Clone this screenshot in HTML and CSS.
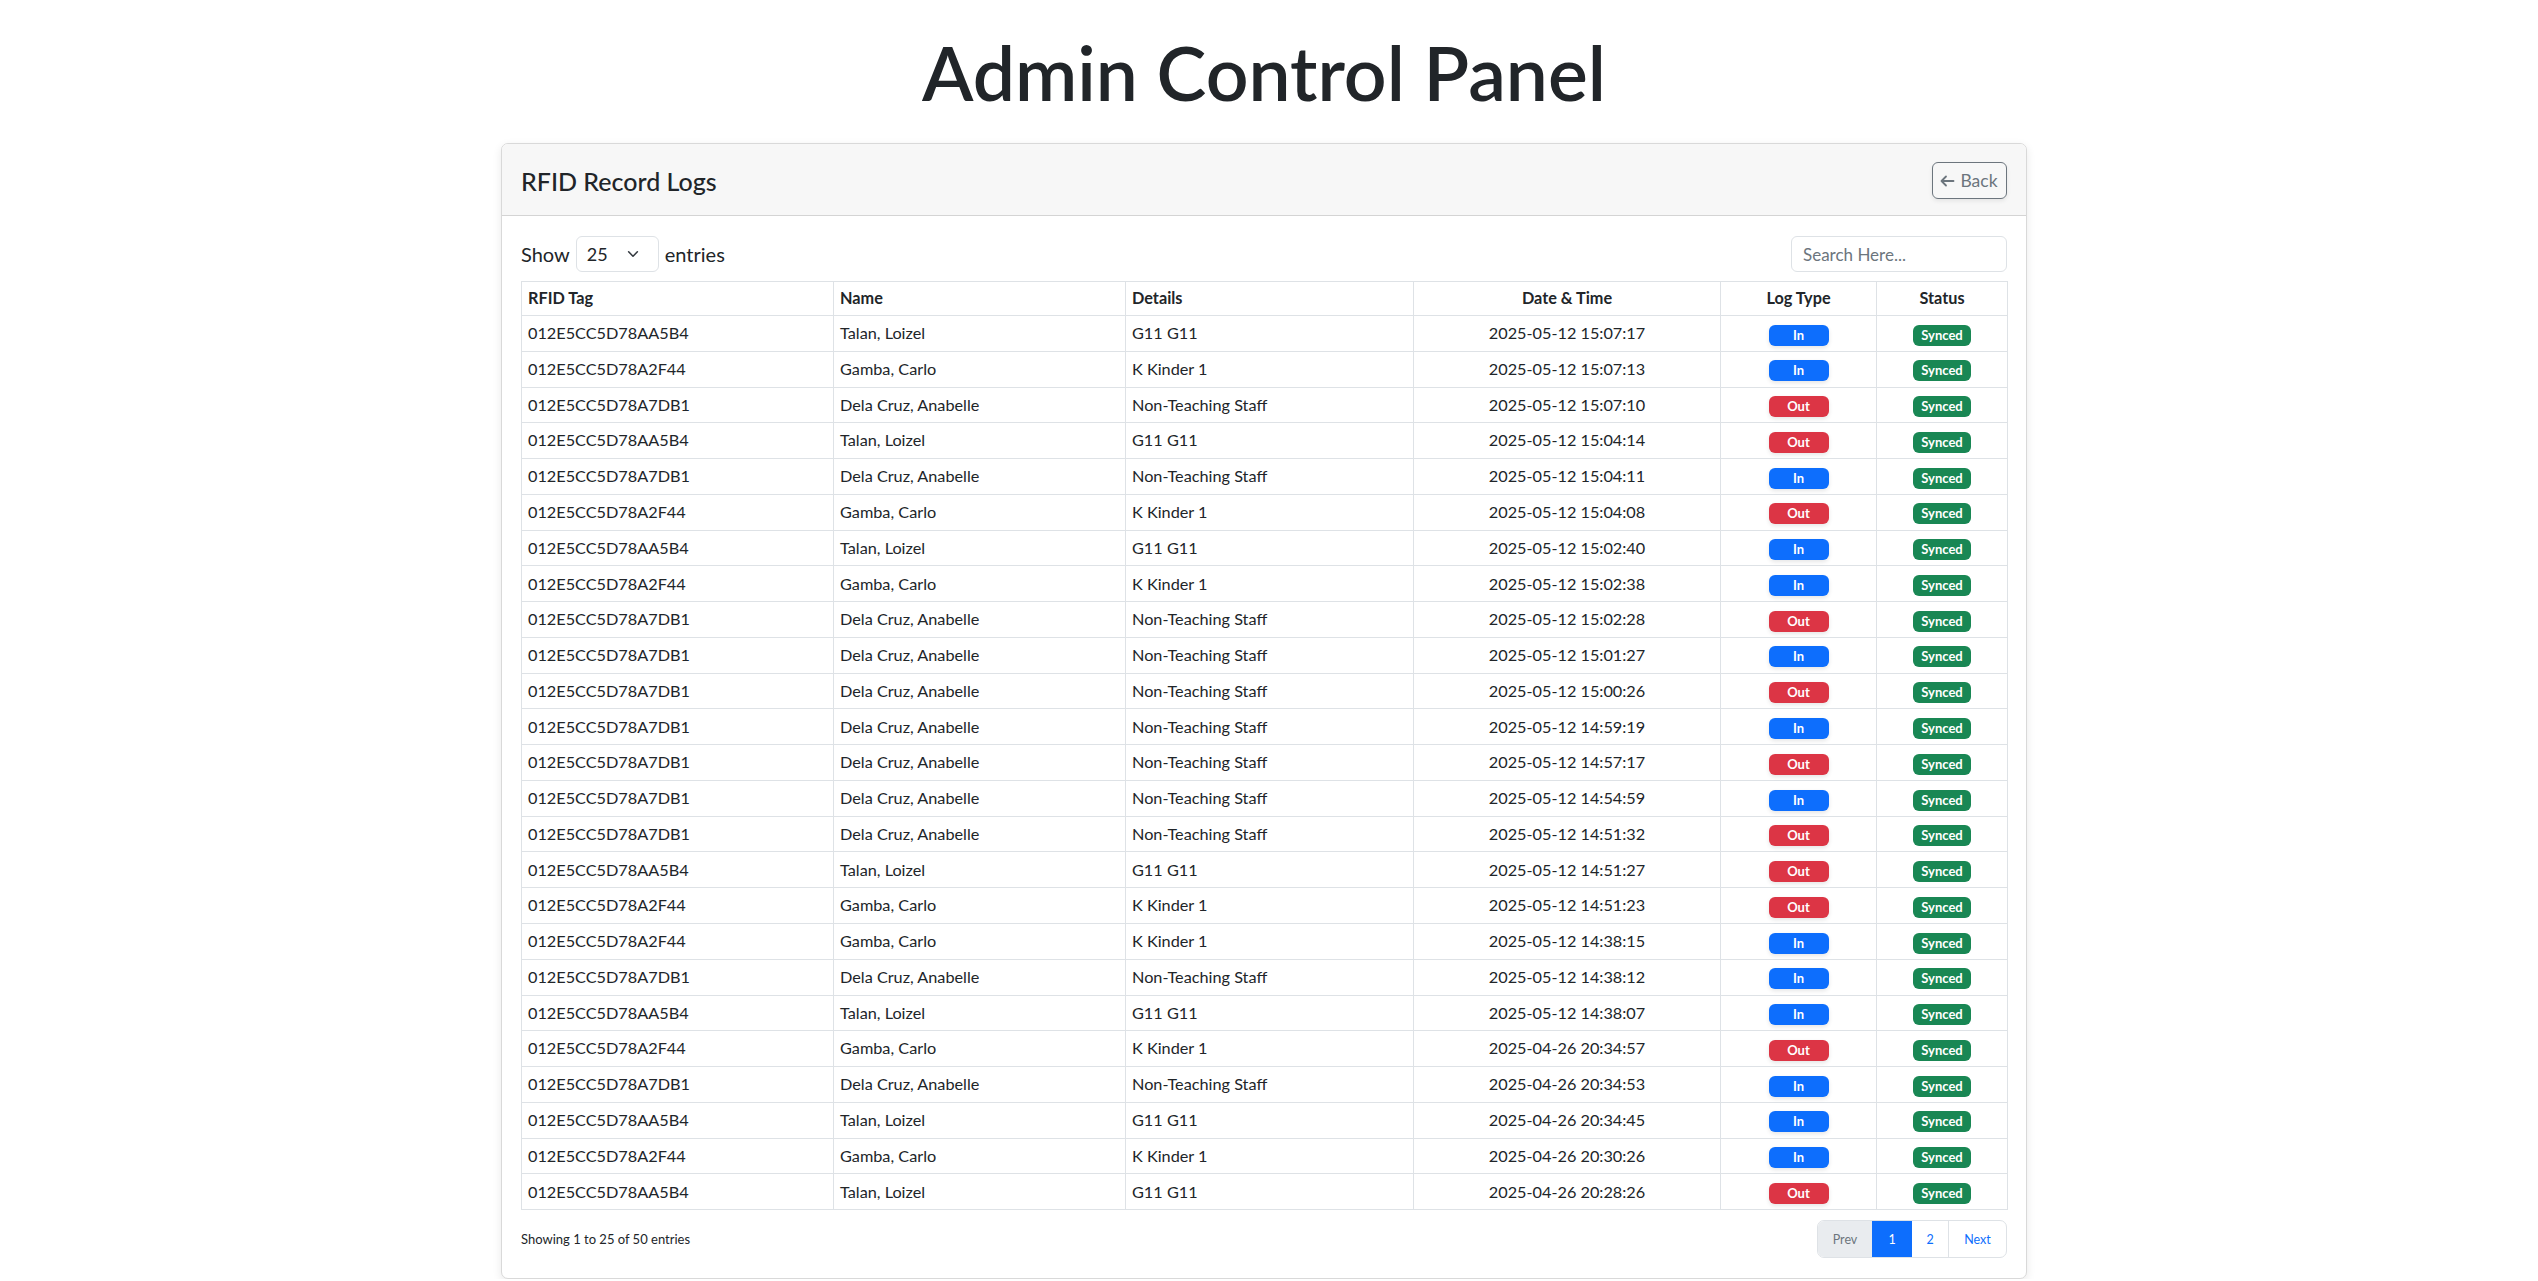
FILE: index.html
```html
<!DOCTYPE html>
<html lang="en">
<head>
<meta charset="utf-8">
<title>Admin Control Panel</title>
<link rel="stylesheet" href="styles.css">
</head>
<body>
<h1 class="page-title">Admin Control Panel</h1>
<div class="card">
  <div class="card-header">
    <h5 class="card-title">RFID Record Logs</h5>
    <button class="btn-back" type="button">
      <svg class="back-icon" viewBox="0 0 16 16" width="16" height="16"><path d="M14.5 8H2.5M7 3.5L2.5 8L7 12.5" fill="none" stroke="currentColor" stroke-width="1.8" stroke-linecap="round" stroke-linejoin="round"/></svg>
      <span>Back</span>
    </button>
  </div>
  <div class="card-body">
    <div class="toolbar">
      <div class="length">
        <span>Show</span>
        <div class="select"><span>25</span><svg class="chev" viewBox="0 0 16 16" width="14" height="14"><path d="M3 5.5l5 5 5-5" fill="none" stroke="#343a40" stroke-width="1.8" stroke-linecap="round" stroke-linejoin="round"/></svg></div>
        <span>entries</span>
      </div>
      <div class="search"><input type="text" placeholder="Search Here..."></div>
    </div>
    <table class="logs">
      <colgroup>
        <col class="c1"><col class="c2"><col class="c3"><col class="c4"><col class="c5"><col class="c6">
      </colgroup>
      <thead>
        <tr><th>RFID Tag</th><th>Name</th><th>Details</th><th class="ctr">Date &amp; Time</th><th class="ctr">Log Type</th><th class="ctr">Status</th></tr>
      </thead>
      <tbody>
        <tr><td>012E5CC5D78AA5B4</td><td>Talan, Loizel</td><td>G11 G11</td><td class="ctr">2025-05-12 15:07:17</td><td class="ctr"><span class="badge in">In</span></td><td class="ctr"><span class="badge synced">Synced</span></td></tr>
        <tr><td>012E5CC5D78A2F44</td><td>Gamba, Carlo</td><td>K Kinder 1</td><td class="ctr">2025-05-12 15:07:13</td><td class="ctr"><span class="badge in">In</span></td><td class="ctr"><span class="badge synced">Synced</span></td></tr>
        <tr><td>012E5CC5D78A7DB1</td><td>Dela Cruz, Anabelle</td><td>Non-Teaching Staff</td><td class="ctr">2025-05-12 15:07:10</td><td class="ctr"><span class="badge out">Out</span></td><td class="ctr"><span class="badge synced">Synced</span></td></tr>
        <tr><td>012E5CC5D78AA5B4</td><td>Talan, Loizel</td><td>G11 G11</td><td class="ctr">2025-05-12 15:04:14</td><td class="ctr"><span class="badge out">Out</span></td><td class="ctr"><span class="badge synced">Synced</span></td></tr>
        <tr><td>012E5CC5D78A7DB1</td><td>Dela Cruz, Anabelle</td><td>Non-Teaching Staff</td><td class="ctr">2025-05-12 15:04:11</td><td class="ctr"><span class="badge in">In</span></td><td class="ctr"><span class="badge synced">Synced</span></td></tr>
        <tr><td>012E5CC5D78A2F44</td><td>Gamba, Carlo</td><td>K Kinder 1</td><td class="ctr">2025-05-12 15:04:08</td><td class="ctr"><span class="badge out">Out</span></td><td class="ctr"><span class="badge synced">Synced</span></td></tr>
        <tr><td>012E5CC5D78AA5B4</td><td>Talan, Loizel</td><td>G11 G11</td><td class="ctr">2025-05-12 15:02:40</td><td class="ctr"><span class="badge in">In</span></td><td class="ctr"><span class="badge synced">Synced</span></td></tr>
        <tr><td>012E5CC5D78A2F44</td><td>Gamba, Carlo</td><td>K Kinder 1</td><td class="ctr">2025-05-12 15:02:38</td><td class="ctr"><span class="badge in">In</span></td><td class="ctr"><span class="badge synced">Synced</span></td></tr>
        <tr><td>012E5CC5D78A7DB1</td><td>Dela Cruz, Anabelle</td><td>Non-Teaching Staff</td><td class="ctr">2025-05-12 15:02:28</td><td class="ctr"><span class="badge out">Out</span></td><td class="ctr"><span class="badge synced">Synced</span></td></tr>
        <tr><td>012E5CC5D78A7DB1</td><td>Dela Cruz, Anabelle</td><td>Non-Teaching Staff</td><td class="ctr">2025-05-12 15:01:27</td><td class="ctr"><span class="badge in">In</span></td><td class="ctr"><span class="badge synced">Synced</span></td></tr>
        <tr><td>012E5CC5D78A7DB1</td><td>Dela Cruz, Anabelle</td><td>Non-Teaching Staff</td><td class="ctr">2025-05-12 15:00:26</td><td class="ctr"><span class="badge out">Out</span></td><td class="ctr"><span class="badge synced">Synced</span></td></tr>
        <tr><td>012E5CC5D78A7DB1</td><td>Dela Cruz, Anabelle</td><td>Non-Teaching Staff</td><td class="ctr">2025-05-12 14:59:19</td><td class="ctr"><span class="badge in">In</span></td><td class="ctr"><span class="badge synced">Synced</span></td></tr>
        <tr><td>012E5CC5D78A7DB1</td><td>Dela Cruz, Anabelle</td><td>Non-Teaching Staff</td><td class="ctr">2025-05-12 14:57:17</td><td class="ctr"><span class="badge out">Out</span></td><td class="ctr"><span class="badge synced">Synced</span></td></tr>
        <tr><td>012E5CC5D78A7DB1</td><td>Dela Cruz, Anabelle</td><td>Non-Teaching Staff</td><td class="ctr">2025-05-12 14:54:59</td><td class="ctr"><span class="badge in">In</span></td><td class="ctr"><span class="badge synced">Synced</span></td></tr>
        <tr><td>012E5CC5D78A7DB1</td><td>Dela Cruz, Anabelle</td><td>Non-Teaching Staff</td><td class="ctr">2025-05-12 14:51:32</td><td class="ctr"><span class="badge out">Out</span></td><td class="ctr"><span class="badge synced">Synced</span></td></tr>
        <tr><td>012E5CC5D78AA5B4</td><td>Talan, Loizel</td><td>G11 G11</td><td class="ctr">2025-05-12 14:51:27</td><td class="ctr"><span class="badge out">Out</span></td><td class="ctr"><span class="badge synced">Synced</span></td></tr>
        <tr><td>012E5CC5D78A2F44</td><td>Gamba, Carlo</td><td>K Kinder 1</td><td class="ctr">2025-05-12 14:51:23</td><td class="ctr"><span class="badge out">Out</span></td><td class="ctr"><span class="badge synced">Synced</span></td></tr>
        <tr><td>012E5CC5D78A2F44</td><td>Gamba, Carlo</td><td>K Kinder 1</td><td class="ctr">2025-05-12 14:38:15</td><td class="ctr"><span class="badge in">In</span></td><td class="ctr"><span class="badge synced">Synced</span></td></tr>
        <tr><td>012E5CC5D78A7DB1</td><td>Dela Cruz, Anabelle</td><td>Non-Teaching Staff</td><td class="ctr">2025-05-12 14:38:12</td><td class="ctr"><span class="badge in">In</span></td><td class="ctr"><span class="badge synced">Synced</span></td></tr>
        <tr><td>012E5CC5D78AA5B4</td><td>Talan, Loizel</td><td>G11 G11</td><td class="ctr">2025-05-12 14:38:07</td><td class="ctr"><span class="badge in">In</span></td><td class="ctr"><span class="badge synced">Synced</span></td></tr>
        <tr><td>012E5CC5D78A2F44</td><td>Gamba, Carlo</td><td>K Kinder 1</td><td class="ctr">2025-04-26 20:34:57</td><td class="ctr"><span class="badge out">Out</span></td><td class="ctr"><span class="badge synced">Synced</span></td></tr>
        <tr><td>012E5CC5D78A7DB1</td><td>Dela Cruz, Anabelle</td><td>Non-Teaching Staff</td><td class="ctr">2025-04-26 20:34:53</td><td class="ctr"><span class="badge in">In</span></td><td class="ctr"><span class="badge synced">Synced</span></td></tr>
        <tr><td>012E5CC5D78AA5B4</td><td>Talan, Loizel</td><td>G11 G11</td><td class="ctr">2025-04-26 20:34:45</td><td class="ctr"><span class="badge in">In</span></td><td class="ctr"><span class="badge synced">Synced</span></td></tr>
        <tr><td>012E5CC5D78A2F44</td><td>Gamba, Carlo</td><td>K Kinder 1</td><td class="ctr">2025-04-26 20:30:26</td><td class="ctr"><span class="badge in">In</span></td><td class="ctr"><span class="badge synced">Synced</span></td></tr>
        <tr><td>012E5CC5D78AA5B4</td><td>Talan, Loizel</td><td>G11 G11</td><td class="ctr">2025-04-26 20:28:26</td><td class="ctr"><span class="badge out">Out</span></td><td class="ctr"><span class="badge synced">Synced</span></td></tr>
      </tbody>
    </table>
    <div class="footer">
      <div class="info">Showing 1 to 25 of 50 entries</div>
      <nav class="pagination">
        <span class="page disabled prev">Prev</span>
        <span class="page active p1">1</span>
        <span class="page p2">2</span>
        <span class="page next">Next</span>
      </nav>
    </div>
  </div>
</div>
</body>
</html>
```
FILE: styles.css
```css
html, body {
  margin: 0;
  background: #fff;
}
body {
  padding: 0 10px 0 0;
  font-family: Lato, "Open Sans", "Liberation Sans", sans-serif;
  color: #212529;
  overflow: hidden;
}
.page-title {
  font-size: 75px;
  font-weight: 600;
  line-height: 90px;
  text-align: center;
  margin: 27px 0 26px;
  color: #212529;
}
.card {
  box-sizing: border-box;
  width: 1526px;
  margin: 0 auto;
  border: 1px solid #d9d9d9;
  border-radius: 7px;
  background: #fff;
  box-shadow: 0 3px 10px rgba(0, 0, 0, 0.09);
}
.card-header {
  display: flex;
  justify-content: space-between;
  align-items: center;
  height: 72px;
  box-sizing: border-box;
  padding: 2px 19px 0;
  background: #f7f7f7;
  border-bottom: 1px solid #d4d4d4;
  border-radius: 6px 6px 0 0;
}
.card-title {
  margin: 0;
  font-size: 25px;
  font-weight: 500;
  line-height: 30px;
}
.btn-back {
  display: flex;
  align-items: center;
  justify-content: center;
  gap: 5px;
  height: 37px;
  width: 75px;
  box-sizing: border-box;
  padding: 0 2px 0 0;
  border: 1px solid #6c757d;
  border-radius: 6px;
  background: transparent;
  color: #6c757d;
  font-family: inherit;
  font-size: 17.5px;
  box-shadow: 0 2px 4px rgba(0, 0, 0, 0.08);
}
.back-icon {
  width: 16px;
  height: 16px;
}
.card-body {
  padding: 20px 19px 20px;
}
.toolbar {
  display: flex;
  justify-content: space-between;
  align-items: center;
  height: 36px;
  margin-bottom: 9px;
}
.length {
  display: flex;
  align-items: center;
  gap: 6px;
  font-size: 20px;
}
.select {
  display: flex;
  align-items: center;
  justify-content: space-between;
  box-sizing: border-box;
  width: 83px;
  height: 36px;
  padding: 0 18px 0 10px;
  border: 1px solid #dee2e6;
  border-radius: 6px;
  font-size: 18px;
}
.chev {
  width: 14px;
  height: 14px;
}
.search input {
  box-sizing: border-box;
  width: 216px;
  height: 36px;
  padding: 0 11px;
  border: 1px solid #dee2e6;
  border-radius: 6px;
  font-family: inherit;
  font-size: 17px;
  color: #212529;
  outline: none;
}
.search input::placeholder {
  color: #6c757d;
}
.logs {
  width: 100%;
  table-layout: fixed;
  border-collapse: separate;
  border-spacing: 0;
  border-top: 1px solid #dee2e6;
  border-left: 1px solid #dee2e6;
  font-size: 16.25px;
}
.c1 { width: 312px; }
.c2 { width: 292px; }
.c3 { width: 288px; }
.c4 { width: 307px; }
.c5 { width: 156px; }
.c6 { width: 131px; }
.logs th,
.logs td {
  border-right: 1px solid #dee2e6;
  border-bottom: 1px solid #dee2e6;
  padding: 5.2px 6px;
  line-height: 24.375px;
  text-align: left;
  white-space: nowrap;
  vertical-align: middle;
}
.logs th {
  padding: 4.3px 6px;
  font-weight: 700;
}
.logs .ctr {
  text-align: center;
}
.badge {
  display: inline-block;
  height: 21px;
  line-height: 21px;
  border-radius: 6px;
  font-size: 13px;
  font-weight: 700;
  color: #fff;
  text-align: center;
  vertical-align: middle;
  box-shadow: 0 2px 4px rgba(0, 0, 0, 0.1);
}
.badge.in,
.badge.out {
  width: 60px;
}
.badge.in { background: #0d6efd; }
.badge.out { background: #dc3545; }
.badge.synced {
  background: #198754;
  padding: 0 8px;
  box-shadow: none;
}
.footer {
  display: flex;
  justify-content: space-between;
  align-items: center;
  margin-top: 10px;
}
.info {
  font-size: 13px;
}
.pagination {
  display: flex;
  height: 36px;
  border: 1px solid #dee2e6;
  border-radius: 7px;
  overflow: hidden;
  font-size: 12.5px;
}
.page {
  display: flex;
  align-items: center;
  justify-content: center;
  color: #0d6efd;
  border-left: 1px solid #dee2e6;
}
.page.prev {
  width: 54px;
  border-left: none;
  background: #e9ecef;
  color: #6c757d;
}
.page.p1 {
  width: 38px;
  background: #0d6efd;
  border-left-color: #0d6efd;
  color: #fff;
}
.page.p2 { width: 36px; border-left-color: #0d6efd; }
.page.next { width: 57px; }
```
